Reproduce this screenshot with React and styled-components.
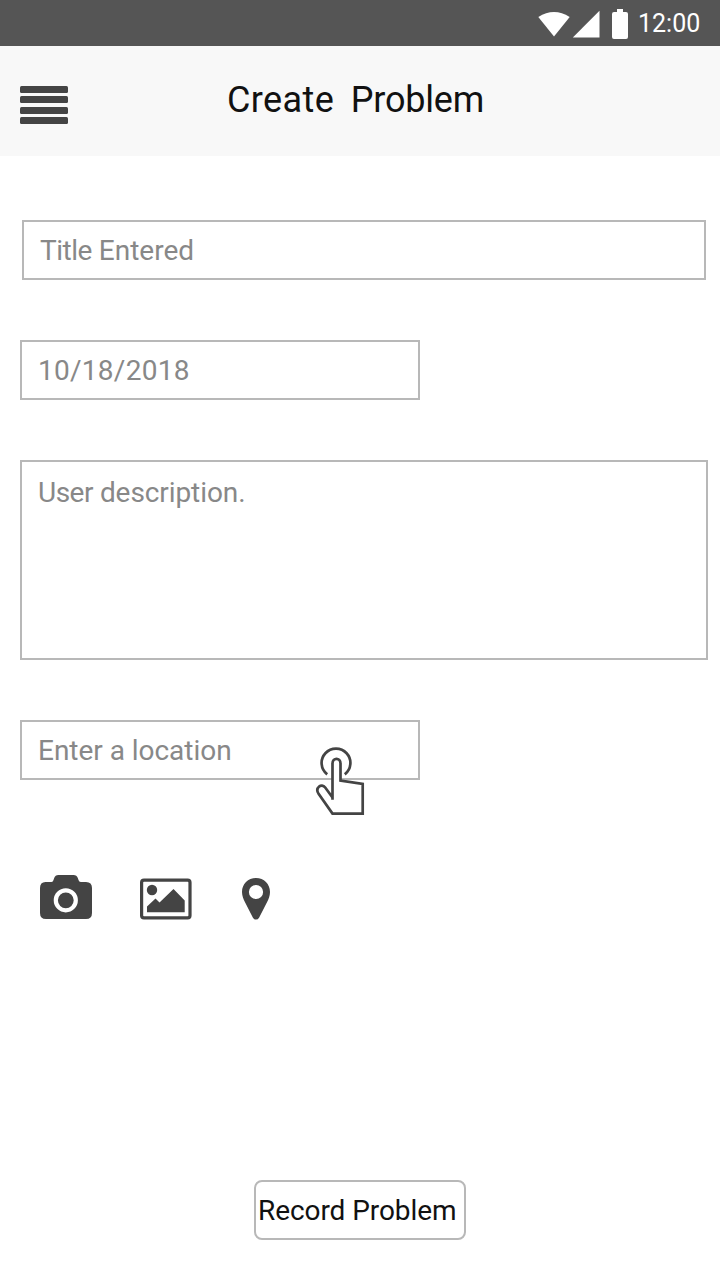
import React from "react";
import styled, { createGlobalStyle } from "styled-components";

const GlobalStyle = createGlobalStyle`
  * { box-sizing: border-box; }
  body { margin: 0; background: #ffffff; font-family: Roboto, "Liberation Sans", sans-serif; }
`;

const Screen = styled.div`
  width: 720px;
  height: 1280px;
  display: flex;
  flex-direction: column;
  background: #ffffff;
  overflow: hidden;
`;

const StatusBar = styled.header`
  height: 46px;
  flex: none;
  display: flex;
  justify-content: flex-end;
  background: #555555;
  color: #ffffff;
`;

const StatusIcons = styled.svg`
  width: 96px;
  height: 46px;
  display: block;
`;

const Clock = styled.span`
  width: 88px;
  padding-left: 6px;
  font-size: 25px;
  line-height: 47px;
  white-space: nowrap;
`;

const AppBar = styled.nav`
  height: 110px;
  flex: none;
  display: grid;
  grid-template-columns: 207px auto;
  padding-left: 20px;
  background: #f8f8f8;
`;

const MenuButton = styled.button`
  width: 48px;
  height: 38px;
  margin: 40px 0 0;
  padding: 0;
  border: 0;
  background: none;

  svg { display: block; }
`;

const Title = styled.h1`
  margin: 0;
  font-size: 36px;
  font-weight: 400;
  line-height: 108px;
  letter-spacing: -0.7px;
  white-space: pre;
  color: #111111;
`;

const Word = styled.span`
  letter-spacing: ${(p) => p.$spacing};
`;

const Form = styled.main`
  flex: 1;
  display: flex;
  flex-direction: column;
  align-items: flex-start;
  gap: 60px;
  padding: 64px 12px 40px 20px;
`;

const Field = styled.div`
  position: relative;
  width: ${(p) => p.$width || "400px"};
  height: ${(p) => p.$height || "60px"};
  flex: none;
  margin-left: ${(p) => p.$indent || 0};
  padding: ${(p) => p.$top || "11px"} 16px 0;
  border: 2px solid #b8b8b8;
  background: #ffffff;
  color: #888888;
  font-size: 28px;
  line-height: 36px;
  letter-spacing: ${(p) => p.$spacing || "normal"};
  white-space: nowrap;
`;

const TapPointer = styled.svg`
  position: absolute;
  left: 292px;
  top: 22px;
  width: 54px;
  height: 74px;
`;

const Attachments = styled.div`
  display: flex;
  height: 50px;
  margin: 32px 0 0 20px;
  gap: 48px;

  svg { display: block; }
`;

const RecordButton = styled.button`
  width: 212px;
  height: 60px;
  margin: auto 0 0 234px;
  padding: 2px 0 0 2px;
  border: 2px solid #b8b8b8;
  border-radius: 8px;
  background: #ffffff;
  color: #111111;
  font: 400 28px/54px Roboto, "Liberation Sans", sans-serif;
  letter-spacing: -0.07px;
  text-align: left;
  white-space: nowrap;
`;

const ink = "#444444";

export default function App() {
  return (
    <>
      <GlobalStyle />
      <Screen>
        <StatusBar>
          <StatusIcons viewBox="536 0 96 46" fill="#fff">
            <path d="M538.3 17Q554 7 569.7 17L554 36.6Z" />
            <path d="M599.5 10.8V37.6H572.8Z" />
            <path d="M617 9h6v3h3q2 0 2 2v23q0 2-2 2h-12q-2 0-2-2V14q0-2 2-2h3Z" />
          </StatusIcons>
          <Clock>12:00</Clock>
        </StatusBar>
        <AppBar>
          <MenuButton aria-label="Menu">
            <svg width="48" height="38" fill={ink}>
              <rect y="0" width="48" height="7" rx="1.5" />
              <rect y="10" width="48" height="7" rx="1.5" />
              <rect y="21" width="48" height="7" rx="1.5" />
              <rect y="31" width="48" height="7" rx="1.5" />
            </svg>
          </MenuButton>
          <Title>
            <Word $spacing="0.4px">Create</Word>
            {"  "}
            <Word $spacing="-0.2px">Problem</Word>
          </Title>
        </AppBar>
        <Form>
          <Field $width="684px" $indent="2px">
            <Word $spacing="-0.5px">Title</Word> Entered
          </Field>
          <Field $spacing="0.27px">10/18/2018</Field>
          <Field $width="688px" $height="200px" $top="13px">
            <Word $spacing="-0.5px">User</Word> <Word $spacing="-0.08px">description.</Word>
          </Field>
          <Field $spacing="-0.03px">
            Enter a location
            <TapPointer viewBox="314 744 54 74" fill="none" stroke={ink} strokeWidth="2.7">
              <path
                fill="#fff"
                d="M332.5 799.8V763.5C332.5 757.2 340.5 757.2 340.5 763.5V780.5L362.7 784V813.6H332.5L318.4 793.4C315 788 321.5 782.5 325.2 787.5L332.5 797.5"
              />
              <path d="M327.2 774.4A14.4 14.4 0 1 1 344.8 774.4" />
            </TapPointer>
          </Field>
          <Attachments>
            <svg width="52" height="50" viewBox="40 872 52 50">
              <path
                fill={ink}
                d="M45.5 882H51.5Q53 882 53.5 880L54.2 878Q55.2 875 58.4 875H73.5Q76.8 875 77.8 878L78.5 880Q79 882 80.8 882H86Q92 882 92 888V913Q92 919 86 919H46Q40 919 40 913V888Q40 882 45.5 882Z"
              />
              <circle cx="65.8" cy="900.3" r="10" fill={ink} stroke="#fff" strokeWidth="4.2" />
            </svg>
            <svg width="52" height="50" viewBox="140 872 52 50">
              <rect x="141.6" y="880.1" width="48.4" height="37.8" rx="2.4" fill="none" stroke={ink} strokeWidth="3.2" />
              <circle cx="152" cy="890" r="5.2" fill={ink} />
              <path fill={ink} d="M147 912.3V906.5L155.5 898.5L159.5 902.5L173.5 889L184.7 900.5V912.3Z" />
            </svg>
            <svg width="32" height="50" viewBox="240 872 32 50">
              <path
                fill={ink}
                fillRule="evenodd"
                d="M256 878C248 878 242 884 242 892C242 896 243.5 899 244.5 901.2L252.8 917.4Q254 919.6 256 919.6T259.2 917.4L267.5 901.2C268.5 899 270 896 270 892C270 884 264 878 256 878ZM256 884.9A7.1 7.1 0 1 1 256 899.1A7.1 7.1 0 1 1 256 884.9Z"
              />
            </svg>
          </Attachments>
          <RecordButton>Record Problem</RecordButton>
        </Form>
      </Screen>
    </>
  );
}
